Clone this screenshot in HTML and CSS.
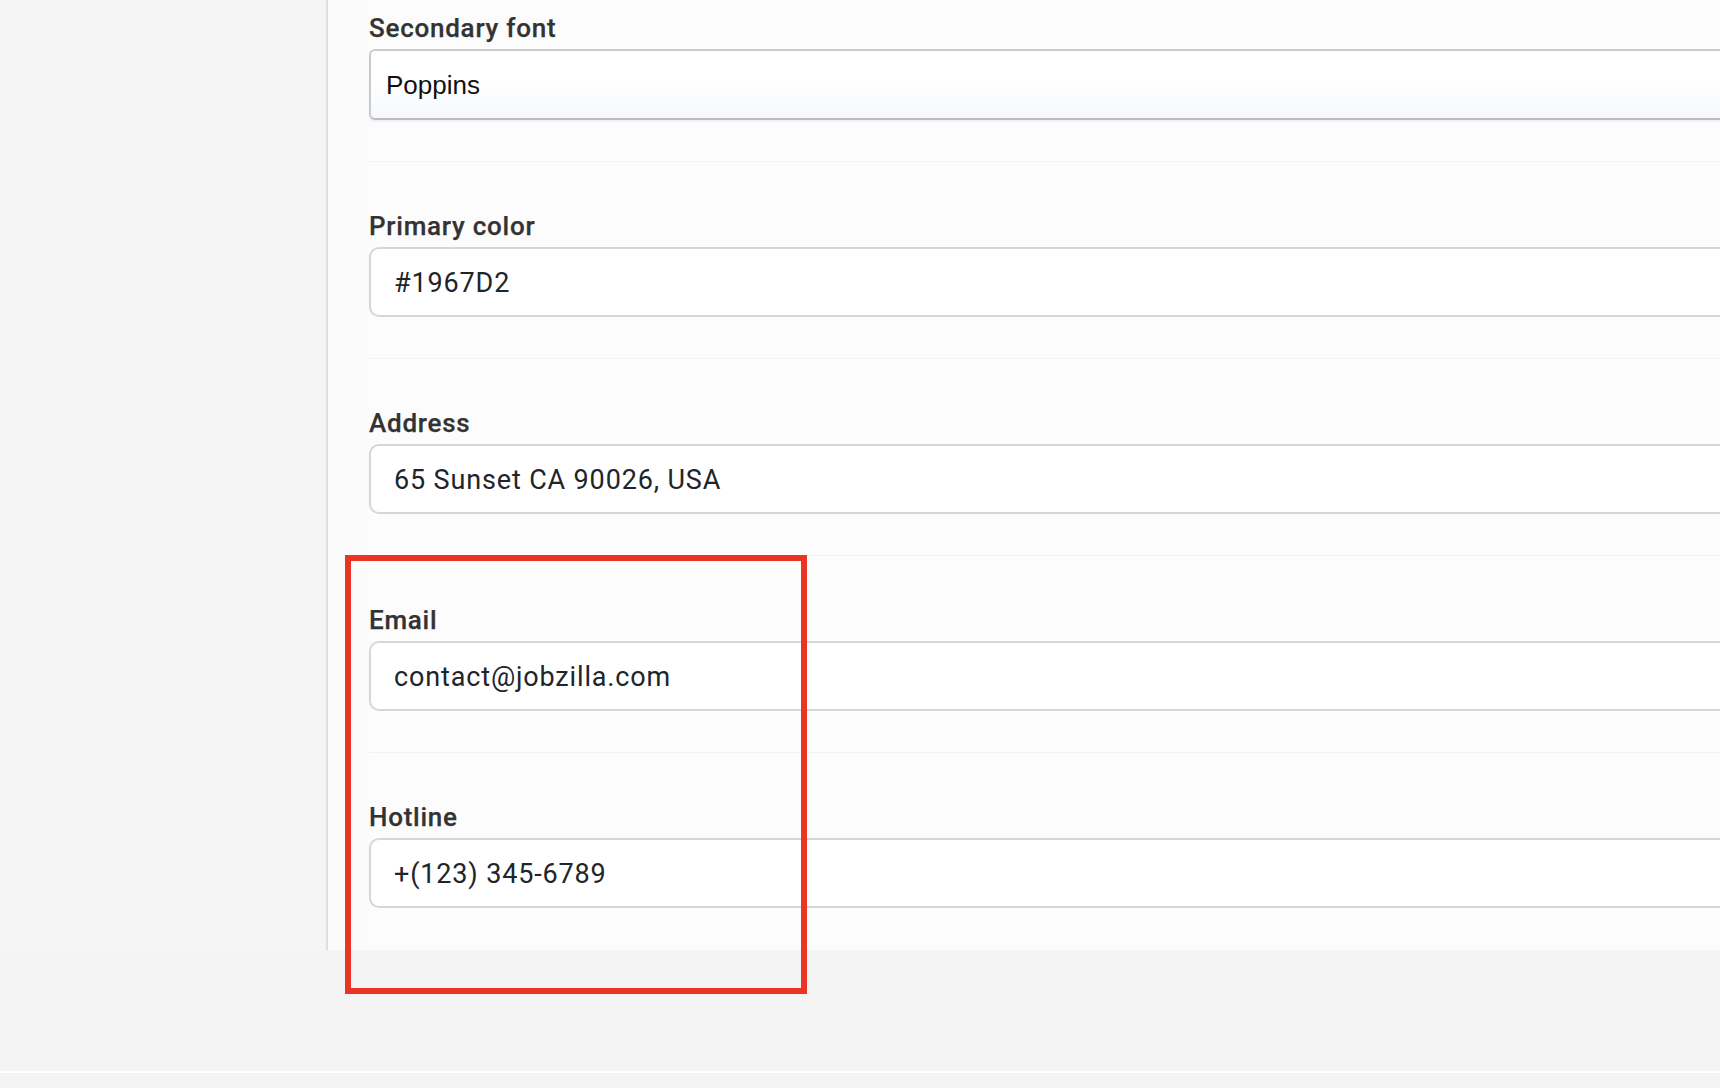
FILE: index.html
```html
<!DOCTYPE html>
<html lang="en">
<head>
<meta charset="utf-8">
<title>Settings</title>
<link rel="stylesheet" href="styles.css">
</head>
<body>
<div class="page">
  <div class="main">
    <aside class="sidebar"></aside>
    <section class="panel">
      <form class="form">
        <div class="field">
          <label class="label" for="f-secondary">Secondary font</label>
          <select class="select" id="f-secondary">
            <option>Poppins</option>
          </select>
        </div>
        <div class="field">
          <label class="label" for="f-primary">Primary color</label>
          <input class="input" id="f-primary" type="text" value="#1967D2">
        </div>
        <div class="field">
          <label class="label" for="f-address">Address</label>
          <input class="input" id="f-address" type="text" value="65 Sunset CA 90026, USA">
        </div>
        <div class="field">
          <label class="label" for="f-email">Email</label>
          <input class="input" id="f-email" type="text" value="contact@jobzilla.com">
        </div>
        <div class="field field-last">
          <label class="label" for="f-hotline">Hotline</label>
          <input class="input" id="f-hotline" type="text" value="+(123) 345-6789">
        </div>
      </form>
    </section>
  </div>
  <div class="gap"></div>
  <div class="footer-line"></div>
  <div class="footer"></div>
  <div class="highlight"></div>
</div>
</body>
</html>
```

FILE: styles.css
```css
* { box-sizing: border-box; }

html, body {
  margin: 0;
  padding: 0;
}

body {
  width: 1720px;
  height: 1088px;
  overflow: hidden;
  background: #f4f4f4;
  font-family: Roboto, "Liberation Sans", Arial, sans-serif;
}

.page {
  position: relative;
  display: flex;
  flex-direction: column;
  height: 1088px;
}

.main {
  display: flex;
}

.sidebar {
  width: 328px;
  flex: 0 0 328px;
  background: #f5f5f5;
  border-right: 2px solid #dedede;
}

.panel {
  flex: 1;
  background: #fbfbfb;
  padding-left: 41px;
  overflow: hidden;
}

.form {
  width: 1700px;
  margin: 0;
}

.field {
  padding: 48px 0 41px;
  border-bottom: 1px solid #f2f2f2;
  background: #fcfcfc;
}

.field:first-child {
  padding-top: 12px;
}

.field-last {
  border-bottom: 0;
  padding-bottom: 42px;
}

.label {
  display: block;
  padding-top: 1px;
  font-family: Roboto, "Liberation Sans", Arial, sans-serif;
  font-size: 26px;
  line-height: 30px;
  font-weight: 500;
  letter-spacing: 0.75px;
  color: #333333;
  -webkit-text-stroke: 0.25px #333333;
  margin-bottom: 6px;
}

.input {
  display: block;
  width: 100%;
  height: 70px;
  border: 2px solid #d3d7dc;
  border-radius: 10px;
  background: #ffffff;
  padding: 2px 23px 0;
  font-family: Roboto, "Liberation Sans", Arial, sans-serif;
  font-size: 27px;
  letter-spacing: 0.85px;
  color: #212529;
  outline: none;
}

.select {
  display: block;
  width: 100%;
  height: 71px;
  -webkit-appearance: none;
  appearance: none;
  border: 2px solid #c6cad1;
  border-bottom-color: #b9bec6;
  border-radius: 6px;
  background: linear-gradient(#ffffff 0%, #ffffff 45%, #f6f8fa 100%);
  box-shadow: 0 2px 2px rgba(0, 0, 0, 0.05);
  padding: 0 15px;
  font-family: "Liberation Sans", Arial, sans-serif;
  font-size: 26px;
  color: #111111;
  outline: none;
}

.gap {
  height: 121px;
  background: #f4f4f4;
}

.footer-line {
  height: 2px;
  background: #ffffff;
}

.footer {
  flex: 1;
  background: #f3f3f3;
}

.highlight {
  position: absolute;
  left: 345px;
  top: 555px;
  width: 462px;
  height: 439px;
  border: 6px solid #ea3424;
  pointer-events: none;
}
```
